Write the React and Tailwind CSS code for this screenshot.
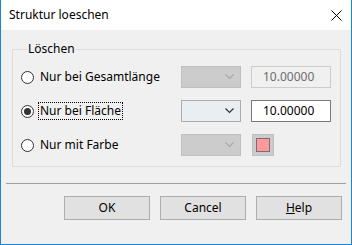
function Chevron({ disabled }) {
  return (
    <svg width="9" height="6" viewBox="0 0 9 6" className="mr-[6px]">
      <path
        d="M0.5 0.5 L4.5 4.5 L8.5 0.5"
        fill="none"
        stroke={disabled ? "#a8a8a8" : "#333333"}
        strokeWidth="1.2"
      />
    </svg>
  );
}

function Combo({ disabled }) {
  return (
    <div
      className={`w-[60px] h-[22px] flex items-center justify-end border ${
        disabled ? "bg-[#cccccc] border-[#bfbfbf]" : "bg-[#e9eef3] border-[#adadad]"
      }`}
    >
      <Chevron disabled={disabled} />
    </div>
  );
}

function Radio({ checked, label, focused }) {
  return (
    <div className="w-[160px] flex items-center">
      <div className="w-[13px] h-[13px] rounded-full border border-[#333333] bg-white flex items-center justify-center">
        {checked && <div className="w-[7px] h-[7px] rounded-full bg-[#333333]" />}
      </div>
      <span
        className={`ml-[4px] px-px leading-[16px] border border-dotted ${
          focused ? "border-black" : "border-transparent"
        }`}
      >
        {label}
      </span>
    </div>
  );
}

export default function App() {
  return (
    <div
      className="w-[352px] h-[245px] flex flex-col border-x border-b border-[#1883d7] bg-[#f0f0f0] text-[12px] text-black"
      style={{ fontFamily: '"Noto Sans", "Open Sans", sans-serif' }}
    >
      {/* title bar */}
      <div className="h-[30px] bg-white flex items-center justify-between pl-[8px] pr-[9px]">
        <span className="text-[12px]">Struktur loeschen</span>
        <svg width="11" height="11" viewBox="0 0 11 11">
          <path d="M0.5 0.5 L10.5 10.5 M10.5 0.5 L0.5 10.5" stroke="#000" strokeWidth="1" />
        </svg>
      </div>

      {/* body */}
      <div className="flex-1 flex flex-col pt-[12px]">
        <fieldset className="ml-[11px] w-[329px] h-[125px] border border-[#dcdcdc] px-[8px] pt-[10px]">
          <legend className="ml-[6px] px-[1px] leading-[14px]">Löschen</legend>

          <div className="flex flex-col gap-[12px]">
            <div className="flex items-center h-[22px]">
              <Radio label="Nur bei Gesamtlänge" />
              <Combo disabled />
              <div className="ml-[10px] w-[80px] h-[22px] border border-[#cccccc] bg-[#f0f0f0] text-[#6d6d6d] flex items-center pl-[11px]">
                10.00000
              </div>
            </div>

            <div className="flex items-center h-[22px]">
              <Radio checked focused label="Nur bei Fläche" />
              <Combo />
              <div className="ml-[10px] w-[80px] h-[22px] border border-[#7a7a7a] bg-white flex items-center pl-[11px]">
                10.00000
              </div>
            </div>

            <div className="flex items-center h-[22px]">
              <Radio label="Nur mit Farbe" />
              <Combo disabled />
              <div className="ml-[11px] w-[22px] h-[22px] border border-[#bfbfbf] bg-[#cccccc] flex items-center justify-center">
                <div className="w-[14px] h-[14px] border border-[#7d6a78] bg-[#ff9a9a]" />
              </div>
            </div>
          </div>
        </fieldset>

        <div className="mx-[5px] mt-[16px] h-px bg-[#a0a0a0]" />

        <div className="flex justify-end gap-[10px] pr-[9px] mt-[12px]">
          <button className="w-[86px] h-[24px] bg-[#e1e1e1] border border-[#adadad]">OK</button>
          <button className="w-[86px] h-[24px] bg-[#e1e1e1] border border-[#adadad]">Cancel</button>
          <button className="w-[86px] h-[24px] bg-[#e1e1e1] border border-[#adadad]">
            <span className="underline">H</span>elp
          </button>
        </div>
      </div>
    </div>
  );
}
